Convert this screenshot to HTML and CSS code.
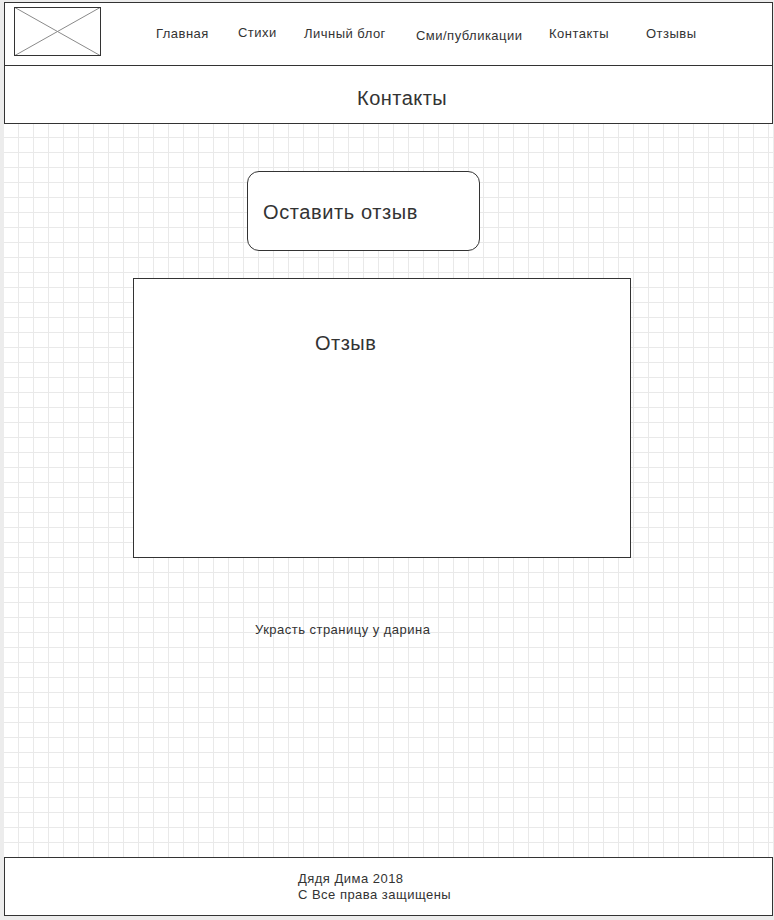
FILE: index.html
```html
<!DOCTYPE html>
<html lang="ru">
<head>
<meta charset="utf-8">
<title>Контакты</title>
<link rel="stylesheet" href="styles.css">
</head>
<body>
<div class="page">
  <header class="topbar">
    <div class="logo">
      <svg width="87" height="49" viewBox="0 0 87 49" xmlns="http://www.w3.org/2000/svg">
        <line x1="0" y1="0" x2="87" y2="49" stroke="#8a8a8a" stroke-width="1"/>
        <line x1="87" y1="0" x2="0" y2="49" stroke="#8a8a8a" stroke-width="1"/>
      </svg>
    </div>
    <nav class="nav">
      <a class="nav-item w-home">Главная</a>
      <a class="nav-item w-poems up">Стихи</a>
      <a class="nav-item w-blog">Личный блог</a>
      <a class="nav-item w-media down">Сми/публикации</a>
      <a class="nav-item w-contacts">Контакты</a>
      <a class="nav-item">Отзывы</a>
    </nav>
  </header>
  <div class="titlebar">Контакты</div>
  <main class="canvas">
    <button class="leave-btn">Оставить отзыв</button>
    <div class="review-box"><span class="review-label">Отзыв</span></div>
    <p class="note">Украсть страницу у дарина</p>
  </main>
  <footer class="footer">
    <div>Дядя Дима 2018</div>
    <div>С Все права защищены</div>
  </footer>
</div>
</body>
</html>
```

FILE: styles.css
```css
* { box-sizing: border-box; }

html, body {
  margin: 0;
  padding: 0;
  background: #ececec;
  font-family: "Liberation Sans", Arial, sans-serif;
  color: #333;
  letter-spacing: 0.03em;
}

.page {
  margin: 2px 0 0 4px;
  width: 769px;
  background-color: #fff;
  background-image:
    linear-gradient(to right, #e9e9e9 1px, transparent 1px),
    linear-gradient(to bottom, #e9e9e9 1px, transparent 1px);
  background-size: 15px 15px;
  background-position: -1px 0;
  display: flex;
  flex-direction: column;
}

.topbar {
  height: 64px;
  border: 1px solid #333;
  background: #fff;
  display: flex;
  align-items: flex-start;
  padding: 4px 0 0 9px;
}

.logo {
  width: 87px;
  height: 49px;
  border: 1px solid #333;
  background: #fff;
  display: flex;
  overflow: hidden;
}

.logo svg { display: block; margin: -1px; }

.nav {
  display: flex;
  margin-left: 55px;
  padding-top: 19px;
  font-size: 13px;
  line-height: 16px;
}

.nav-item {
  color: #333;
  text-decoration: none;
  white-space: nowrap;
}

.w-home { width: 82px; }
.w-poems { width: 66px; }
.w-blog { width: 112px; }
.w-media { width: 133px; }
.w-contacts { width: 97px; }

.up { margin-top: -1px; }
.down { margin-top: 2px; }

.titlebar {
  height: 58px;
  border: 1px solid #333;
  border-top: none;
  background: #fff;
  font-size: 20px;
  line-height: 23px;
  padding: 21px 0 0 352px;
  color: #333;
}

.canvas {
  height: 733px;
  display: flex;
  flex-direction: column;
  align-items: flex-start;
}

.leave-btn {
  margin: 47px 0 0 243px;
  width: 233px;
  height: 80px;
  border: 1px solid #333;
  border-radius: 12px;
  background: #fff;
  font-family: inherit;
  font-size: 20px;
  letter-spacing: 0.03em;
  color: #333;
  text-align: left;
  padding: 2px 0 0 15px;
  display: flex;
  align-items: center;
}

.review-box {
  margin: 27px 0 0 129px;
  width: 498px;
  height: 280px;
  border: 1px solid #333;
  background: #fff;
  padding: 53px 0 0 181px;
  font-size: 20px;
  line-height: 23px;
  color: #333;
}

.note {
  margin: 64px 0 0 251px;
  font-size: 13px;
  line-height: 16px;
  color: #333;
}

.footer {
  height: 59px;
  border: 1px solid #333;
  background: #fff;
  padding: 13px 0 0 293px;
  font-size: 13px;
  line-height: 16px;
  color: #333;
}
```
